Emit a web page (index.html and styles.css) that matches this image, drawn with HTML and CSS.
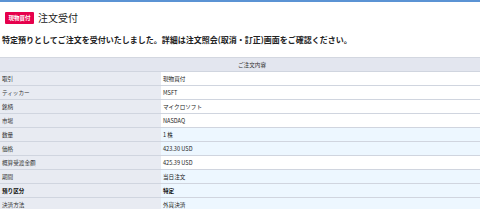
FILE: index.html
```html
<!DOCTYPE html>
<html lang="ja">
<head>
    <meta charset="UTF-8">
    <meta name="viewport" content="width=device-width, initial-scale=1.0">
    <title>注文受付</title>
    <link rel="stylesheet" href="styles.css">
</head>
<body>
    <div class="top-bar"></div>
    <div class="page-head">
        <span class="badge">現物買付</span>
        <h1>注文受付</h1>
    </div>
    <p class="message">特定預りとしてご注文を受付いたしました。詳細は注文照会(取消・訂正)画面をご確認ください。</p>

    <table class="order-table">
        <tr>
            <th colspan="2" class="table-title">ご注文内容</th>
        </tr>
        <tr><th>取引</th><td>現物買付</td></tr>
        <tr><th>ティッカー</th><td>MSFT</td></tr>
        <tr><th>銘柄</th><td>マイクロソフト</td></tr>
        <tr><th>市場</th><td>NASDAQ</td></tr>
        <tr class="hl"><th>数量</th><td>1 株</td></tr>
        <tr class="hl"><th>価格</th><td>423.30 USD</td></tr>
        <tr><th>概算受渡金額</th><td>425.39 USD</td></tr>
        <tr class="hl"><th>期間</th><td>当日注文</td></tr>
        <tr class="hl strong"><th>預り区分</th><td>特定</td></tr>
        <tr class="hl"><th>決済方法</th><td>外貨決済</td></tr>
    </table>
</body>
</html>
```

FILE: styles.css
```css
* {
    margin: 0;
    padding: 0;
    box-sizing: border-box;
}

body {
    background: #fff;
    color: #222;
    font-family: "Noto Sans CJK JP", "Noto Sans", sans-serif;
    overflow: hidden;
}

.top-bar {
    height: 2px;
    background: #5b93d4;
}

.page-head {
    display: flex;
    align-items: center;
    gap: 4px;
    padding: 8px 5px 0;
    height: 23px;
}

.badge {
    display: inline-block;
    background: #e6004c;
    color: #fff;
    font-size: 5.5px;
    font-weight: bold;
    line-height: 12px;
    height: 12px;
    padding: 0 3.5px;
    border-radius: 1px;
}

h1 {
    font-size: 10px;
    font-weight: normal;
    line-height: 13px;
}

.message {
    font-size: 8px;
    font-weight: bold;
    line-height: 12px;
    padding: 9px 2px 0;
    height: 32px;
}

.order-table {
    width: 100%;
    border-collapse: collapse;
    font-size: 5.6px;
    border-top: 1px solid #d3d7e0;
}

.order-table th,
.order-table td {
    height: 14px;
    padding: 0 2px;
    text-align: left;
    font-weight: normal;
    border-bottom: 1px solid #d0d5df;
    vertical-align: middle;
}

.order-table th {
    width: 161px;
    background: #e8ebf2;
    color: #333;
}

.order-table td {
    background: #fff;
}

.order-table .table-title {
    width: auto;
    text-align: center;
    padding-left: 26px;
    background: #e3e6ef;
}

.order-table tr.hl td {
    background: #edf7ff;
}

.order-table tr.strong th,
.order-table tr.strong td {
    font-weight: bold;
    color: #111;
}
```
